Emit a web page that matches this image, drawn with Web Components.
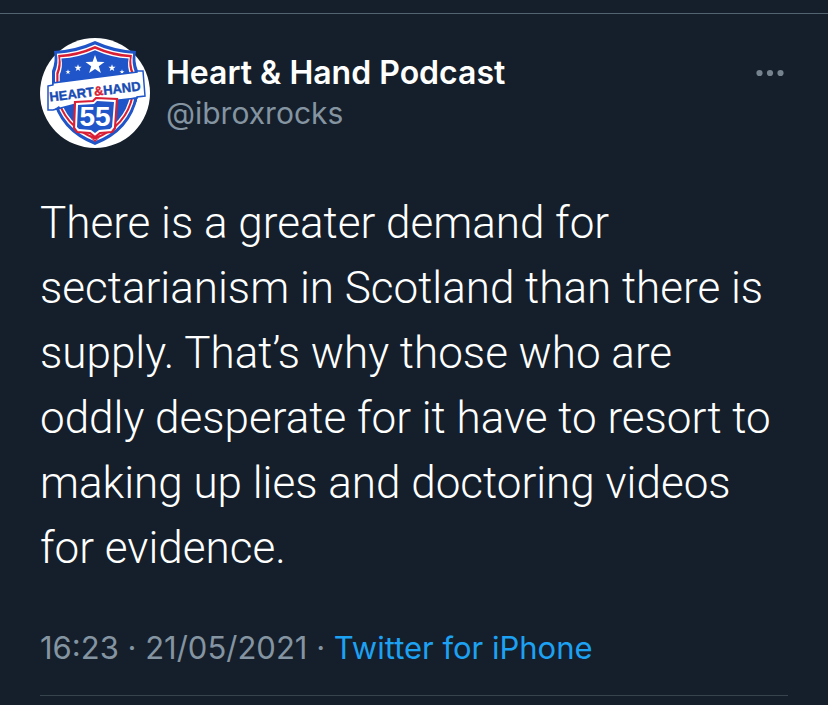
<!DOCTYPE html>
<html lang="en">
<head>
  <meta charset="UTF-8">
  <meta name="viewport" content="width=device-width, initial-scale=1">
  <title>Heart &amp; Hand Podcast</title>
  <style>
    body {
      background: #151f2b;
      font-family: Inter, "Liberation Sans", sans-serif;
      margin: 0;
    }
  </style>
</head>
<body>
  <tweet-card>
    <tweet-author slot="author" name="Heart &amp; Hand Podcast" handle="@ibroxrocks">
      <podcast-badge></podcast-badge>
    </tweet-author>
    <more-button slot="menu"></more-button>
    There is a greater demand for sectarianism in Scotland than there is supply. That’s why those who are oddly desperate for it have to resort to making up lies and doctoring videos for evidence.
    <tweet-meta slot="meta" time="16:23" date="21/05/2021" source="Twitter for iPhone"></tweet-meta>
  </tweet-card>

  <script>
    class PodcastBadge extends HTMLElement {
      constructor () {
        super()
        this.shadow = this.attachShadow({ mode: 'open' })
      }

      connectedCallback () {
        this.render()
      }

      render () {
        this.shadow.innerHTML =
        /* html */`
        <style>
          :host {
            display: block;
            flex: none;
            height: 110px;
            width: 110px;
          }

          svg {
            display: block;
            height: 100%;
            width: 100%;
          }

          text {
            font-family: "Liberation Sans", sans-serif;
            font-weight: 700;
          }

          .title {
            font-size: 13px;
          }

          .number {
            font-size: 28px;
          }
        </style>

        <svg viewBox="0 0 110 110" role="img" aria-label="Heart and Hand logo">
          <defs>
            <path id="shield" d="M55 3 Q75 12 96 13 Q94 23 98 33 V58 Q91 93 55 107 Q19 93 12 58 V33 Q16 23 14 13 Q35 12 55 3Z"/>
            <path id="star" d="M0 -10 L2.4 -3.2 L9.5 -3.1 L3.8 1.2 L5.9 8.1 L0 4 L-5.9 8.1 L-3.8 1.2 L-9.5 -3.1 L-2.4 -3.2Z"/>
          </defs>
          <circle cx="55" cy="55" r="55" fill="#fff"/>
          <use href="#shield" fill="#1f55c8"/>
          <use href="#shield" fill="#fff" transform="translate(55 54) scale(.93) translate(-55 -54)"/>
          <use href="#shield" fill="#d81f35" transform="translate(55 54) scale(.9) translate(-55 -54)"/>
          <use href="#shield" fill="#fff" transform="translate(55 54) scale(.85) translate(-55 -54)"/>
          <use href="#shield" fill="#1f55c8" transform="translate(55 54) scale(.82) translate(-55 -54)"/>
          <g fill="#fff">
            <use href="#star" transform="translate(55 27)"/>
            <use href="#star" transform="translate(38 30) scale(.38)"/>
            <use href="#star" transform="translate(72 30) scale(.38)"/>
            <use href="#star" transform="translate(28 34) scale(.27)"/>
            <use href="#star" transform="translate(82 34) scale(.27)"/>
          </g>
          <path d="M8 48 L13 47 V45 L97 34 V33 L103 33 L105 58 L97 59 V60 L70 63 L57 60 L54 64 L40 65 L13 72 L8 72Z" fill="#fff" stroke="#1f55c8" stroke-width="1.5"/>
          <path d="M13 72 L19 68 L21 71Z M92 60 L97 59 L97 64Z" fill="#1f55c8"/>
          <path d="M35 64 L53 63 L56 60 L77 61 L75 90 L72 94 L60 95 L55 99 L50 95 L37 94 L34 90Z" fill="#fff" stroke="#d81f35" stroke-width="2.2"/>
          <path d="M38 67 L54 66 L57 63 L74 64 L72 89 L70 91 L59 92 L55 95 L51 92 L39 91 L37 89Z" fill="#1f55c8"/>
          <g class="title" transform="rotate(-7 55 54)">
            <text x="55" y="58" text-anchor="middle" fill="#174bb3" stroke="#174bb3" stroke-width=".4">HEART<tspan fill="#d81f35" stroke="#d81f35">&amp;</tspan>HAND</text>
          </g>
          <text class="number" x="55" y="88" text-anchor="middle" fill="#fff">55</text>
          <path d="M50 99 L55 102 L60 99 L55 104Z" fill="#d81f35"/>
        </svg>
        `
      }
    }

    class TweetAuthor extends HTMLElement {
      constructor () {
        super()
        this.shadow = this.attachShadow({ mode: 'open' })
      }

      connectedCallback () {
        this.render()
      }

      render () {
        this.shadow.innerHTML =
        /* html */`
        <style>
          :host {
            display: block;
          }

          .author {
            display: flex;
            gap: 16px;
          }

          .names {
            font-size: 30px;
            line-height: 40px;
            padding-top: 15px;
          }

          h2 {
            color: #fff;
            font-size: 32px;
            font-weight: 600;
            margin: 0;
          }

          p {
            color: #8494a1;
            margin: 0;
          }
        </style>

        <div class="author">
          <slot></slot>
          <div class="names">
            <h2></h2>
            <p></p>
          </div>
        </div>
        `

        this.shadow.querySelector('h2').textContent = this.getAttribute('name')
        this.shadow.querySelector('p').textContent = this.getAttribute('handle')
      }
    }

    class MoreButton extends HTMLElement {
      constructor () {
        super()
        this.shadow = this.attachShadow({ mode: 'open' })
      }

      connectedCallback () {
        this.render()
      }

      render () {
        this.shadow.innerHTML =
        /* html */`
        <style>
          :host {
            display: block;
          }

          button {
            background: none;
            border: 0;
            color: #75838f;
            cursor: pointer;
            display: block;
            padding: 30px 3px;
          }

          svg {
            display: block;
          }
        </style>

        <button type="button" aria-label="More">
          <svg width="30" height="10" viewBox="0 0 30 10" fill="currentColor">
            <circle cx="4.5" cy="5" r="3.1"/>
            <circle cx="15" cy="5" r="3.1"/>
            <circle cx="25.5" cy="5" r="3.1"/>
          </svg>
        </button>
        `
      }
    }

    class TweetMeta extends HTMLElement {
      constructor () {
        super()
        this.shadow = this.attachShadow({ mode: 'open' })
      }

      connectedCallback () {
        this.render()
      }

      render () {
        this.shadow.innerHTML =
        /* html */`
        <style>
          :host {
            color: #8494a1;
            display: block;
            font-size: 31px;
            line-height: 40px;
          }

          a {
            color: #1da1f2;
            text-decoration: none;
          }
        </style>

        <time></time> · <a href="#"></a>
        `

        this.shadow.querySelector('time').textContent = `${this.getAttribute('time')} · ${this.getAttribute('date')}`
        this.shadow.querySelector('a').textContent = this.getAttribute('source')
      }
    }

    class TweetCard extends HTMLElement {
      constructor () {
        super()
        this.shadow = this.attachShadow({ mode: 'open' })
      }

      connectedCallback () {
        this.render()
      }

      render () {
        this.shadow.innerHTML =
        /* html */`
        <style>
          :host {
            display: block;
            padding-top: 13px;
          }

          article {
            border-top: 1px solid #526470;
            padding: 24px 40px 0;
          }

          header {
            display: flex;
            justify-content: space-between;
          }

          .text {
            color: #fff;
            font-family: Roboto, "Liberation Sans", sans-serif;
            font-size: 44px;
            font-weight: 300;
            line-height: 65px;
            margin: 43px 0 0;
            padding-right: 10px;
          }

          footer {
            border-bottom: 1px solid #38444d;
            margin-top: 47px;
            padding-bottom: 27px;
          }
        </style>

        <article>
          <header>
            <slot name="author"></slot>
            <slot name="menu"></slot>
          </header>
          <p class="text"><slot></slot></p>
          <footer><slot name="meta"></slot></footer>
        </article>
        `
      }
    }

    customElements.define('podcast-badge', PodcastBadge)
    customElements.define('tweet-author', TweetAuthor)
    customElements.define('more-button', MoreButton)
    customElements.define('tweet-meta', TweetMeta)
    customElements.define('tweet-card', TweetCard)
  </script>
</body>
</html>
